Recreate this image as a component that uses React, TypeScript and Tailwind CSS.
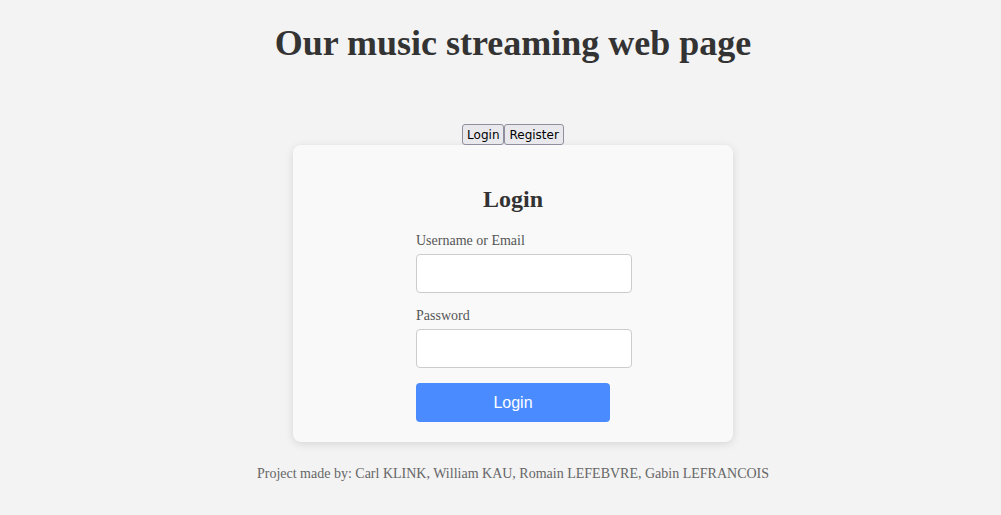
export default function App() {
  return (
    <div className="min-h-screen bg-[#f3f3f3] pl-[25px] font-['Liberation_Serif',serif] text-[#333]">
      <h1 className="pt-[23px] text-center text-[36px] font-bold leading-[41px]">
        Our music streaming web page
      </h1>

      <div className="mt-[60px] flex justify-center font-['DejaVu_Sans',sans-serif] text-[12px] text-black">
        <button className="h-[21px] rounded-[3px] border border-[#8f8f9d] bg-[#e9e9ed] px-[4px]">
          Login
        </button>
        <button className="h-[21px] rounded-[3px] border border-[#8f8f9d] bg-[#e9e9ed] px-[4px]">
          Register
        </button>
      </div>

      <div className="mx-auto w-[440px] rounded-lg bg-[#f9f9f9] pt-[40px] pb-[20px] shadow-[0_2px_8px_rgba(0,0,0,0.12)]">
        <h2 className="text-center text-[24px] font-bold leading-[28px]">Login</h2>
        <form className="mx-auto w-[194px]">
          <label className="mt-[20px] block text-[14px] leading-[16px] text-[#555]">
            Username or Email
          </label>
          <input
            type="text"
            className="mt-[5px] block h-[39px] w-[216px] rounded-[4px] border border-[#ccc] bg-white px-[10px] outline-none"
          />
          <label className="mt-[15px] block text-[14px] leading-[16px] text-[#555]">
            Password
          </label>
          <input
            type="password"
            className="mt-[5px] block h-[39px] w-[216px] rounded-[4px] border border-[#ccc] bg-white px-[10px] outline-none"
          />
          <button
            type="button"
            className="mt-[15px] block h-[39px] w-full rounded-[4px] bg-[#4a8cff] font-['Liberation_Sans',sans-serif] text-[16px] text-white"
          >
            Login
          </button>
        </form>
      </div>

      <p className="mt-[24px] text-center text-[14px] leading-[16px] text-[#666]">
        Project made by: Carl KLINK, William KAU, Romain LEFEBVRE, Gabin LEFRANCOIS
      </p>
    </div>
  );
}
